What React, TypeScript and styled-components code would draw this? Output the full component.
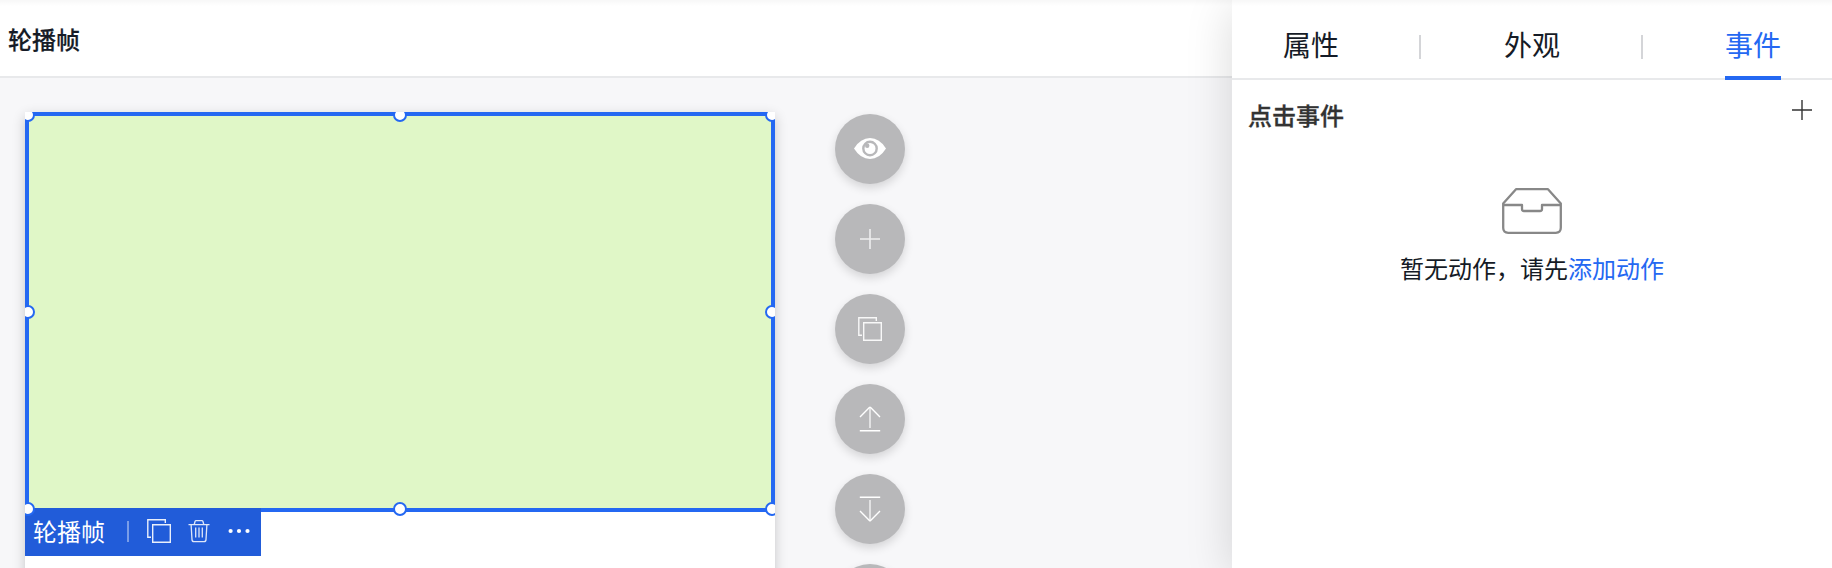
import React from "react";
import styled, { createGlobalStyle } from "styled-components";

const GlobalStyle = createGlobalStyle`
  * { box-sizing: border-box; }
  body {
    margin: 0;
    overflow: hidden;
    font-family: "Noto Sans CJK SC", sans-serif;
    color: #151b26;
  }
  svg { display: block; flex: none; }
`;

const Page = styled.div`
  position: relative;
  display: flex;
  width: 1832px;
  height: 568px;
  overflow: hidden;
  background: #f7f7f9;
  &::after {
    content: "";
    position: absolute;
    inset: 0 0 auto;
    height: 6px;
    background: linear-gradient(rgba(0, 0, 0, 0.03), rgba(0, 0, 0, 0));
    z-index: 3;
  }
`;

const Workspace = styled.main`
  flex: 1;
  min-width: 0;
`;

const Header = styled.header`
  height: 78px;
  padding: 22px 8px 0;
  border-bottom: 2px solid #e8e9eb;
  background: #fff;
  font-size: 24px;
  font-weight: 500;
  line-height: 34px;
  -webkit-text-stroke: 0.2px currentColor;
`;

const Stage = styled.div`
  display: flex;
  align-items: flex-start;
  gap: 60px;
  padding: 34px 0 0 25px;
`;

const Card = styled.div`
  width: 750px;
  height: 600px;
  background: #fff;
  box-shadow: 0 4px 12px rgba(0, 0, 0, 0.2);
`;

const Clip = styled.div`
  height: 600px;
  overflow: hidden;
`;

const Selection = styled.div`
  position: relative;
  height: 400px;
  border: 4px solid #2468f2;
  background: #e0f7c7;
`;

const Handle = styled.i<{ $x: string; $y: string }>`
  position: absolute;
  left: ${(p) => p.$x};
  top: ${(p) => p.$y};
  width: 14px;
  height: 14px;
  margin: -7px 0 0 -7px;
  border: 2px solid #2468f2;
  border-radius: 50%;
  background: #fff;
  z-index: 2;
`;

const FloatingBar = styled.div`
  position: absolute;
  left: -4px;
  top: 392px;
  display: flex;
  align-items: center;
  width: 236px;
  height: 48px;
  padding: 0 0 2px 8px;
  background: #215cd9;
  color: #fff;
  font-size: 24px;
  line-height: 34px;
`;

const BarDivider = styled.span`
  width: 2px;
  height: 21px;
  margin: 0 18px 0 22px;
  background: rgba(255, 255, 255, 0.4);
`;

const BarIcons = styled.div`
  display: flex;
  gap: 16px;
`;

const Actions = styled.div`
  display: flex;
  flex-direction: column;
  gap: 20px;
  padding-top: 2px;
`;

const ActionButton = styled.button`
  display: grid;
  place-items: center;
  width: 70px;
  height: 70px;
  padding: 0;
  border: 0;
  border-radius: 50%;
  background: #b8b8ba;
  box-shadow: 0 4px 10px rgba(0, 0, 0, 0.14);
`;

const Panel = styled.aside`
  width: 600px;
  background: #fff;
  box-shadow: 0 8px 44px rgba(0, 0, 0, 0.15);
  z-index: 1;
`;

const Tabs = styled.nav`
  display: flex;
  justify-content: space-between;
  height: 80px;
  padding: 0 51px;
  border-bottom: 2px solid #e8e9eb;
`;

const Tab = styled.span<{ $active?: boolean }>`
  height: 80px;
  padding-top: 24px;
  font-size: 28px;
  line-height: 40px;
  color: ${(p) => (p.$active ? "#2468f2" : "inherit")};
  border-bottom: 4px solid ${(p) => (p.$active ? "#2468f2" : "transparent")};
`;

const TabDivider = styled.span`
  width: 2px;
  height: 24px;
  margin-top: 35px;
  background: #d4d5d8;
  &:nth-child(2) {
    margin-left: -2px;
    margin-right: 2px;
  }
`;

const SectionHead = styled.div`
  display: flex;
  justify-content: space-between;
  align-items: flex-start;
  height: 54px;
  padding: 18px 20px 0 16px;
`;

const SectionTitle = styled.h2`
  margin: 0;
  font-size: 24px;
  font-weight: 500;
  line-height: 34px;
  color: #333;
  -webkit-text-stroke: 0.3px currentColor;
`;

const PlusSlot = styled.span`
  padding-top: 2px;
`;

const Empty = styled.div`
  display: flex;
  flex-direction: column;
  align-items: center;
  padding-top: 54px;
`;

const EmptyText = styled.p`
  margin: 17px 0 0;
  font-size: 24px;
  line-height: 34px;
`;

const Link = styled.a`
  color: #2468f2;
`;

const CopyIcon = () => (
  <svg width="24" height="24" fill="none" stroke="#fff" strokeWidth="1.4" opacity="0.9">
    <path d="M4 18.3H.8V.8h17.5V4" />
    <path d="M5.7 5.7h17.6v17.6H5.7z" />
  </svg>
);

const TrashIcon = () => (
  <svg width="24" height="24" fill="none" stroke="#fff" strokeWidth="1.3" opacity="0.85">
    <path d="M1.500 5.600h21M7.200 5.500l.9-3.200q.2-.6 1-.6h5.800q.8 0 1 .6l.9 3.200M4.100 5.600l.9 15q.1 2 2 2h10q1.900 0 2-2l.9-15M8.700 8.500v10M12 8.500v10M15.300 8.500v10" />
  </svg>
);

const DotsIcon = () => (
  <svg width="24" height="24" fill="#fff">
    <circle cx="3.600" cy="12" r="2.100" />
    <circle cx="12" cy="12" r="2.100" />
    <circle cx="20.500" cy="12" r="2.100" />
  </svg>
);

const EyeIcon = () => (
  <svg width="32" height="22" fill="none">
    <path d="M0 10.500Q6.500 0 16 0T32 10.500Q25.500 21 16 21T0 10.500z" fill="#fff" />
    <circle cx="16" cy="10.500" r="6.700" stroke="#b8b8ba" strokeWidth="2.400" />
    <circle cx="13.200" cy="7.700" r="2.200" fill="#b8b8ba" />
  </svg>
);

const PlusIcon = ({ color, width }: { color: string; width: number }) => (
  <svg width="20" height="20" stroke={color} strokeWidth={width}>
    <path d="M0 10h20M10 0v20" />
  </svg>
);

const ArrowIcon = ({ down }: { down?: boolean }) => (
  <svg width="22" height="26" viewBox="0 0 22 26" fill="none" stroke="#fff" strokeWidth="1.400">
    <g transform={down ? "rotate(180 11 13)" : undefined}>
      <path d="M1 11 10.400 1.600q.6-.6 1.200 0L21 11M.8 24.800h20.400" />
      <path d="M11 1.500v20.500" opacity="0.85" />
    </g>
  </svg>
);

const InboxIcon = () => (
  <svg width="60" height="46" fill="none" stroke="#888" strokeWidth="2.300" strokeLinejoin="round">
    <path d="M14 1.200h32l12.800 14.300V39.800q0 5-5 5H6.200q-5 0-5-5V15.500z" />
    <path d="M1.200 17h18.800v4q0 2 2 2h16q2 0 2-2v-4h18.800" />
  </svg>
);

const handles: [string, string][] = [
  ["-1px", "-1px"], ["50%", "-1px"], ["calc(100% + 1px)", "-1px"],
  ["-1px", "50%"], ["calc(100% + 1px)", "50%"],
  ["-1px", "calc(100% + 1px)"], ["50%", "calc(100% + 1px)"], ["calc(100% + 1px)", "calc(100% + 1px)"],
];

export default function App() {
  return (
    <Page>
      <GlobalStyle />
      <Workspace>
        <Header>轮播帧</Header>
        <Stage>
          <Card>
            <Clip>
              <Selection>
                {handles.map(([x, y]) => <Handle key={x + y} $x={x} $y={y} />)}
                <FloatingBar>
                  轮播帧
                  <BarDivider />
                  <BarIcons>
                    <CopyIcon />
                    <TrashIcon />
                    <DotsIcon />
                  </BarIcons>
                </FloatingBar>
              </Selection>
            </Clip>
          </Card>
          <Actions>
            <ActionButton><EyeIcon /></ActionButton>
            <ActionButton><PlusIcon color="#eeeeef" width={1.6} /></ActionButton>
            <ActionButton><CopyIcon /></ActionButton>
            <ActionButton><ArrowIcon /></ActionButton>
            <ActionButton><ArrowIcon down /></ActionButton>
            <ActionButton />
          </Actions>
        </Stage>
      </Workspace>
      <Panel>
        <Tabs>
          <Tab>属性</Tab>
          <TabDivider />
          <Tab>外观</Tab>
          <TabDivider />
          <Tab $active>事件</Tab>
        </Tabs>
        <SectionHead>
          <SectionTitle>点击事件</SectionTitle>
          <PlusSlot><PlusIcon color="#333" width={1.4} /></PlusSlot>
        </SectionHead>
        <Empty>
          <InboxIcon />
          <EmptyText>暂无动作，请先<Link>添加动作</Link></EmptyText>
        </Empty>
      </Panel>
    </Page>
  );
}
